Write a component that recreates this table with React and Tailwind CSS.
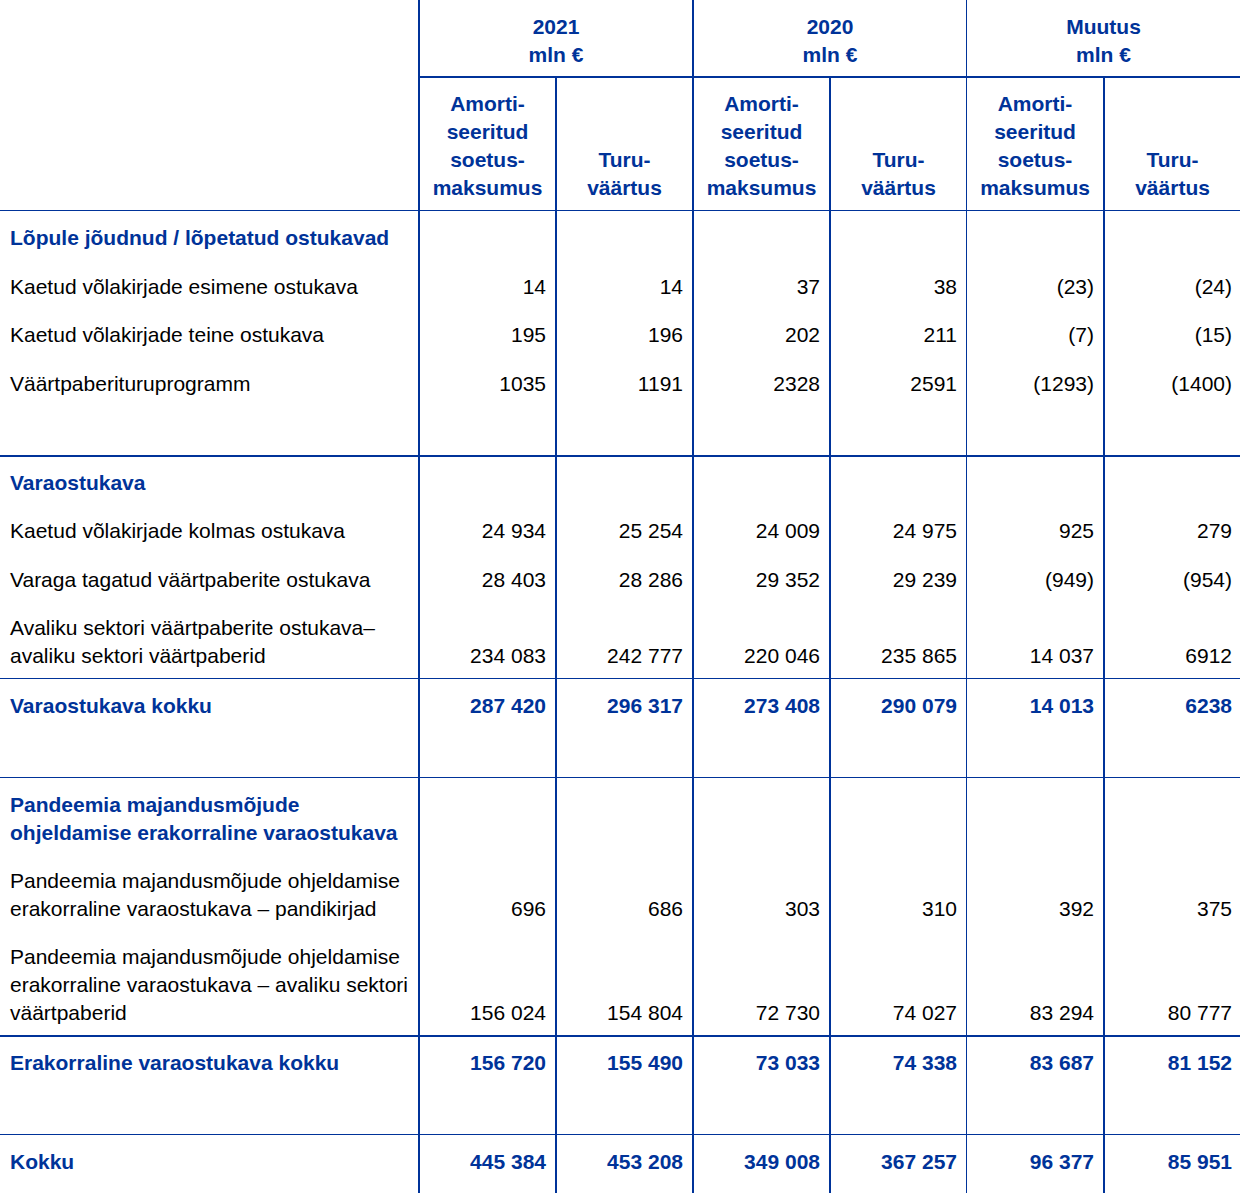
const blue = "text-[#003399]";

// left borders of the six number columns (x = 419, 556, 693, 830, 967, 1104)
const colLines = [
  "border-l-2",
  "border-l-2",
  "border-l-2",
  "border-l-2",
  "border-l",
  "border-l-2",
];

const rows = [
  { label: ["Lõpule jõudnud / lõpetatud ostukavad"], head: true, top: "border-t", pt: "pt-[13px]", pb: "" },
  { label: ["Kaetud võlakirjade esimene ostukava"], vals: ["14", "14", "37", "38", "(23)", "(24)"], pt: "pt-[21px]", pb: "" },
  { label: ["Kaetud võlakirjade teine ostukava"], vals: ["195", "196", "202", "211", "(7)", "(15)"], pt: "pt-[20px]", pb: "" },
  { label: ["Väärtpaberituruprogramm"], vals: ["1035", "1191", "2328", "2591", "(1293)", "(1400)"], pt: "pt-[21px]", pb: "pb-[57px]" },
  { label: ["Varaostukava"], head: true, top: "border-t-2", pt: "pt-[12px]", pb: "" },
  { label: ["Kaetud võlakirjade kolmas ostukava"], vals: ["24 934", "25 254", "24 009", "24 975", "925", "279"], pt: "pt-[20px]", pb: "" },
  { label: ["Varaga tagatud väärtpaberite ostukava"], vals: ["28 403", "28 286", "29 352", "29 239", "(949)", "(954)"], pt: "pt-[21px]", pb: "" },
  { label: ["Avaliku sektori väärtpaberite ostukava–", "avaliku sektori väärtpaberid"], vals: ["234 083", "242 777", "220 046", "235 865", "14 037", "6912"], pt: "pt-[20px]", pb: "pb-[8px]" },
  { label: ["Varaostukava kokku"], total: true, vals: ["287 420", "296 317", "273 408", "290 079", "14 013", "6238"], top: "border-t", pt: "pt-[13px]", pb: "pb-[57px]" },
  { label: ["Pandeemia majandusmõjude", "ohjeldamise erakorraline varaostukava"], head: true, top: "border-t", pt: "pt-[13px]", pb: "" },
  { label: ["Pandeemia majandusmõjude ohjeldamise", "erakorraline varaostukava – pandikirjad"], vals: ["696", "686", "303", "310", "392", "375"], pt: "pt-[20px]", pb: "" },
  { label: ["Pandeemia majandusmõjude ohjeldamise", "erakorraline varaostukava – avaliku sektori", "väärtpaberid"], vals: ["156 024", "154 804", "72 730", "74 027", "83 294", "80 777"], pt: "pt-[20px]", pb: "pb-[8px]" },
  { label: ["Erakorraline varaostukava kokku"], total: true, vals: ["156 720", "155 490", "73 033", "74 338", "83 687", "81 152"], top: "border-t-2", pt: "pt-[12px]", pb: "pb-[57px]" },
  { label: ["Kokku"], total: true, vals: ["445 384", "453 208", "349 008", "367 257", "96 377", "85 951"], top: "border-t", pt: "pt-[13px]", pb: "pb-[18px]" },
];

function Lines({ items }) {
  return items.map((t, i) => (
    <span key={i} className="block whitespace-nowrap">
      {t}
    </span>
  ));
}

function SubHead({ line, last }) {
  return (
    <th
      className={`${line} border-t-2 border-[#003399] pb-[8px] pt-[12px] align-bottom text-center font-bold ${blue}`}
    >
      {last ? (
        <Lines items={["Turu-", "väärtus"]} />
      ) : (
        <Lines items={["Amorti-", "seeritud", "soetus-", "maksumus"]} />
      )}
    </th>
  );
}

export default function App() {
  return (
    <div className="w-[1240px] bg-white font-['Liberation_Sans',Arial,sans-serif] text-[21px] leading-[28px] text-black">
      <table className="w-[1240px] table-fixed border-separate border-spacing-0">
        <colgroup>
          <col className="w-[418px]" />
          <col className="w-[137px]" />
          <col className="w-[137px]" />
          <col className="w-[137px]" />
          <col className="w-[137px]" />
          <col className="w-[137px]" />
          <col className="w-[137px]" />
        </colgroup>
        <thead>
          <tr>
            <th rowSpan={2}></th>
            {["2021", "2020", "Muutus"].map((y, i) => (
              <th
                key={y}
                colSpan={2}
                className={`${i === 2 ? "border-l" : "border-l-2"} border-[#003399] pt-[13px] pb-[7px] align-top text-center font-bold ${blue}`}
              >
                <Lines items={[y, "mln €"]} />
              </th>
            ))}
          </tr>
          <tr>
            {colLines.map((line, i) => (
              <SubHead key={i} line={line} last={i % 2 === 1} />
            ))}
          </tr>
        </thead>
        <tbody>
          {rows.map((r, ri) => {
            const edge = `${r.top || ""} ${r.pt} ${r.pb} border-[#003399]`;
            const strong = r.head || r.total;
            return (
              <tr key={ri}>
                <td
                  className={`${edge} pl-[10px] align-top ${strong ? `font-bold ${blue}` : ""}`}
                >
                  <Lines items={r.label} />
                </td>
                {colLines.map((line, ci) => (
                  <td
                    key={ci}
                    className={`${edge} ${line} ${ci === 5 ? "pr-[8px]" : "pr-[9px]"} text-right ${r.total ? "align-top" : "align-bottom"} ${r.total ? `font-bold ${blue}` : ""}`}
                  >
                    {r.vals ? r.vals[ci] : ""}
                  </td>
                ))}
              </tr>
            );
          })}
        </tbody>
      </table>
    </div>
  );
}
